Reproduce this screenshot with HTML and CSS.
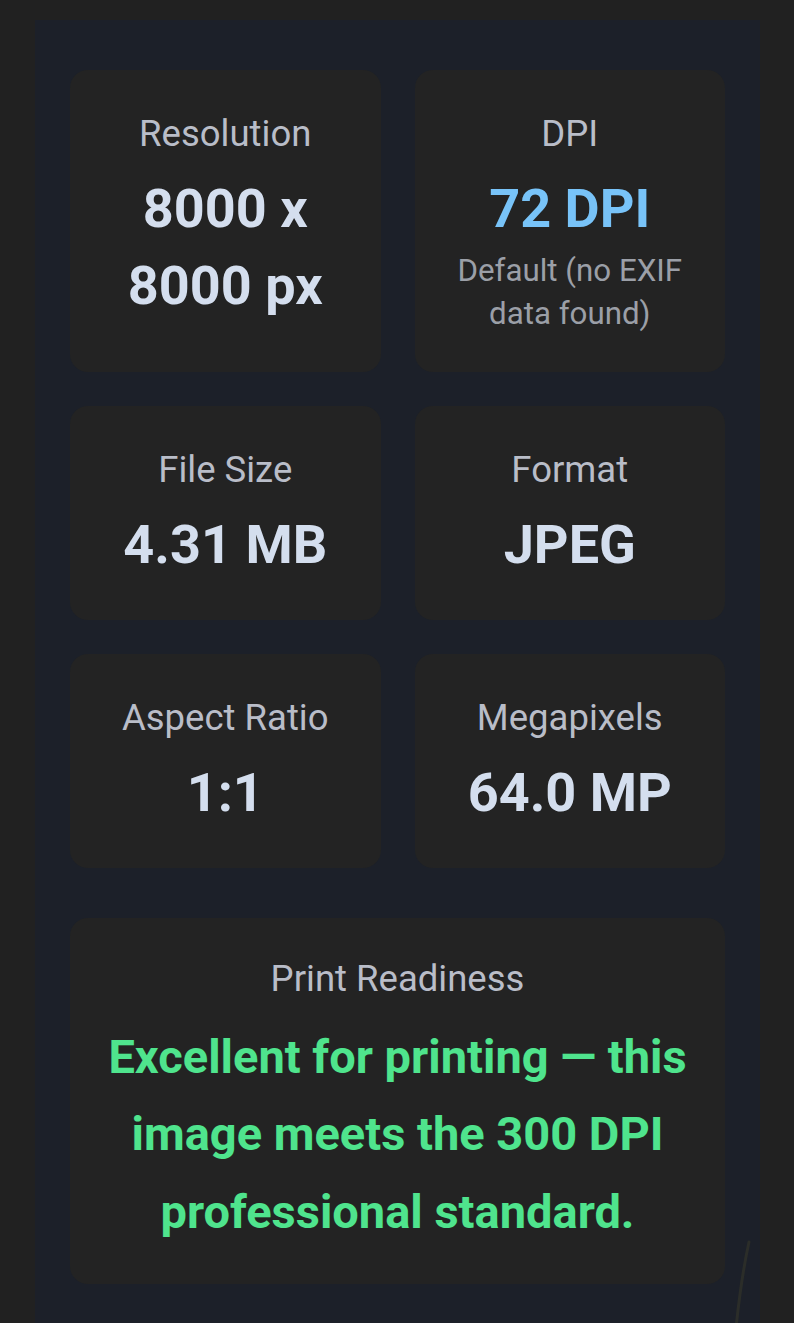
FILE: index.html
```html
<!DOCTYPE html>
<html lang="en">
<head>
<meta charset="utf-8">
<title>Image Info</title>
<link rel="stylesheet" href="styles.css">
</head>
<body>
<main class="panel">
  <section class="grid">
    <div class="card">
      <div class="label">Resolution</div>
      <div class="value">8000 x 8000 px</div>
    </div>
    <div class="card">
      <div class="label">DPI</div>
      <div class="value value-blue">72 DPI</div>
      <div class="sub">Default (no EXIF data found)</div>
    </div>
    <div class="card">
      <div class="label">File Size</div>
      <div class="value">4.31 MB</div>
    </div>
    <div class="card">
      <div class="label">Format</div>
      <div class="value">JPEG</div>
    </div>
    <div class="card">
      <div class="label">Aspect Ratio</div>
      <div class="value">1:1</div>
    </div>
    <div class="card">
      <div class="label">Megapixels</div>
      <div class="value">64.0 MP</div>
    </div>
  </section>
  <section class="card card-wide">
    <div class="label">Print Readiness</div>
    <div class="verdict">Excellent for printing — this image meets the 300 DPI professional standard.</div>
  </section>
</main>
<svg class="mark" width="30" height="90" viewBox="0 0 30 90" aria-hidden="true">
  <path d="M16 2 C12 20, 8 40, 3 88" stroke="#2f3129" stroke-width="3" fill="none" stroke-linecap="round"/>
</svg>
</body>
</html>
```

FILE: styles.css
```css
* { box-sizing: border-box; }

html, body {
  margin: 0;
  padding: 0;
  background: #212121;
  font-family: Roboto, "Liberation Sans", Arial, sans-serif;
  overflow: hidden;
}

body {
  padding: 20px 34px 0 35px;
  min-height: 1323px;
  position: relative;
}

.panel {
  background: #1c2029;
  padding: 50px 35px 40px;
  min-height: 1303px;
}

.grid {
  display: grid;
  grid-template-columns: 1fr 1fr;
  gap: 34px;
}

.card {
  background: #232323;
  border-radius: 18px;
  padding: 37.5px 28px;
  text-align: center;
}

.label {
  font-size: 36.5px;
  line-height: 52px;
  color: #b9bdc8;
  font-weight: 400;
}

.value {
  margin-top: 10px;
  font-size: 54px;
  line-height: 77px;
  font-weight: 700;
  color: #d4deee;
}

.value-blue {
  color: #78c3f8;
}

.sub {
  margin-top: 2px;
  font-size: 31.3px;
  line-height: 43px;
  color: #9b9fa7;
}

.card-wide {
  margin-top: 50px;
  padding: 35px 30px 34px;
}

.verdict {
  margin-top: 12.5px;
  font-size: 47px;
  line-height: 77.5px;
  font-weight: 700;
  color: #4fe48d;
}

.mark {
  position: absolute;
  left: 733px;
  top: 1240px;
  opacity: 0.8;
}
```
